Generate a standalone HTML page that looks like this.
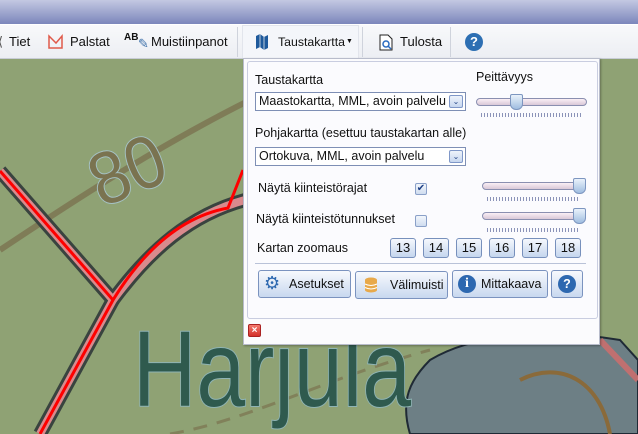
<!DOCTYPE html>
<html><head><style>
*{margin:0;padding:0;box-sizing:border-box}
html,body{overflow:hidden}
body{width:638px;height:434px;position:relative;font-family:"Liberation Sans","DejaVu Sans",sans-serif;font-size:12px;color:#111;background:#8fa274}
#top{position:absolute;left:0;top:0;width:638px;height:24px;background:linear-gradient(#c3c8e2,#7b86bb)}
#tb{position:absolute;left:0;top:24px;width:638px;height:35px;background:linear-gradient(#f8f9fb,#eceef3);border-top:1px solid #fff;border-bottom:1px solid #c8ccd6;overflow:hidden}
.ti{position:absolute;top:0;height:34px;line-height:34px;font-size:13px;white-space:nowrap}
.ic{position:absolute;top:9px}
.sep{position:absolute;top:2px;width:1px;height:30px;background:#cfd3dc}
#panel{position:absolute;left:243px;top:58px;width:357px;height:287px;background:#fbfbfd;border:1px solid #b8bccb;box-shadow:1px 1px 2px rgba(0,0,0,.3)}
#inner{position:absolute;left:3px;top:2px;width:351px;height:258px;border:1px solid #c9cde0;border-radius:3px;background:#fbfbfe}
.lbl{position:absolute;font-size:12.5px;white-space:nowrap}
.sel{position:absolute;height:19px;border:1px solid #7e8fb5;background:#fff;font-size:12.5px;line-height:17px;padding-left:3px;white-space:nowrap}
.sel i{position:absolute;right:2px;top:2px;width:14px;height:13px;border:1px solid #7f97c8;border-radius:2px;background:linear-gradient(#eef3fb,#c6d6ef);font-style:normal;font-size:8px;line-height:12px;text-align:center;color:#2b4a8a}
.sl{position:absolute;height:8px;border:1px solid #8a8fb0;border-radius:4px;background:linear-gradient(#fbeff5,#d9c8d8)}
.ticks{position:absolute;height:4px;background:repeating-linear-gradient(90deg,#8b93b8 0 1px,transparent 1px 3px)}
.knob{position:absolute;width:13px;height:16px;background:linear-gradient(#eaf2fb,#9fbde0);border:1px solid #7d96c0;border-radius:2px 2px 6px 6px}
.cb{position:absolute;width:12px;height:12px;border:1px solid #8aa0c8;background:linear-gradient(#f2f6fc,#cfdcef);border-radius:2px;font-size:10px;line-height:10px;text-align:center;color:#1d3f86}
.z{position:absolute;width:26px;height:20px;border:1px solid #7790bc;border-radius:3px;background:linear-gradient(#f5f8fd,#c5d6ee);text-align:center;line-height:18px;font-size:13px}
.bt{position:absolute;height:28px;border:1px solid #7b93bf;border-radius:3px;background:linear-gradient(#f7f9fd,#c8d8ef);font-size:12.5px;line-height:26px;white-space:nowrap}
</style></head><body>
<svg width="638" height="434" style="position:absolute;left:0;top:0">
<path d="M0,250 C60,210 150,150 250,100" stroke="#7a7350" stroke-width="6" fill="none" opacity=".8"/>
<path d="M170,434 C250,420 320,380 430,350" stroke="#7a7350" stroke-width="3" stroke-dasharray="14 10" fill="none" opacity=".7"/>
<g fill="none" stroke-linejoin="round">
<path d="M0,171 L113,300 L40,434" stroke="#39433f" stroke-width="14"/>
<path d="M113,300 C150,250 190,215 245,200" stroke="#39433f" stroke-width="14"/>
<path d="M0,171 L113,300 L40,434" stroke="#d98a8d" stroke-width="8"/>
<path d="M113,300 C150,250 190,215 245,200" stroke="#d98a8d" stroke-width="8"/>
<path d="M0,171 L113,300 L40,434" stroke="#ff0000" stroke-width="3"/>
<path d="M113,300 C150,240 190,215 228,208 L243,170" stroke="#ff0000" stroke-width="3"/>
</g>
<path d="M430,360 C480,330 560,330 620,340 L638,360 L638,434 L410,434 C400,400 410,380 430,360Z" fill="#6d7f85" stroke="#1f2a35" stroke-width="2"/>
<path d="M520,380 C560,360 600,380 610,434" stroke="#8a6a3a" stroke-width="4" fill="none"/>
<path d="M600,340 L638,380" stroke="#c07070" stroke-width="6"/>
<text x="86" y="196" transform="rotate(-22 124 162)" font-family="Liberation Sans" font-size="74" fill="#7a7350" stroke="#a5c2c4" stroke-width="2" paint-order="stroke" textLength="76" lengthAdjust="spacingAndGlyphs">80</text>
<text x="133" y="406" font-family="Liberation Sans" font-size="108" fill="#2f5a4e" stroke="#8fb4b4" stroke-width="2" paint-order="stroke" textLength="278" lengthAdjust="spacingAndGlyphs">Harjula</text>
</svg>
<div id="top"></div>
<div id="tb">
<div class="ti" style="left:-2px;color:#555">&#10216;</div>
<div class="ti" style="left:9px">Tiet</div>
<svg class="ic" style="left:48px" width="15" height="16"><path d="M1,2 L1,14 L14,14 L14,2 L8,9 Z" fill="none" stroke="#e05a4a" stroke-width="1.5"/></svg>
<div class="ti" style="left:70px">Palstat</div>
<div class="ti" style="left:124px;top:-4px;font-size:10px;font-weight:bold">AB</div>
<div class="ti" style="left:138px;top:2px;color:#3a6ea8">&#9998;</div>
<div class="ti" style="left:151px">Muistiinpanot</div>
<div class="sep" style="left:237px"></div>
<div style="position:absolute;left:242px;top:0;width:117px;height:34px;background:#f4f6fa;border:1px solid #e2e5ec"></div>
<svg class="ic" style="left:255px" width="14" height="17"><path d="M1,2 L5,0 L9,3 L13,1 L13,14 L9,16 L5,13 L1,15Z" fill="#1f5a9c"/><path d="M5,0 L5,13 M9,3 L9,16" stroke="#bcd" stroke-width="1"/></svg>
<div class="ti" style="left:278px;font-size:12.3px">Taustakartta</div>
<div class="ti" style="left:346px;font-size:7px">&#9660;</div>
<div class="sep" style="left:362px"></div>
<svg class="ic" style="left:379px" width="15" height="17"><path d="M1,1 L9,1 L13,5 L13,16 L1,16Z" fill="#fff" stroke="#222"/><circle cx="7" cy="10" r="3" fill="none" stroke="#2a6ac0" stroke-width="1.5"/><path d="M9,12 L12,15" stroke="#2a6ac0" stroke-width="1.5"/></svg>
<div class="ti" style="left:400px">Tulosta</div>
<div class="sep" style="left:450px"></div>
<div style="position:absolute;left:465px;top:8px;width:18px;height:18px;border-radius:9px;background:#2d6fb3;color:#fff;font-weight:bold;text-align:center;line-height:18px;font-size:13px">?</div>
</div>
<div id="panel">
<div id="inner">
<div class="lbl" style="left:7px;top:11px">Taustakartta</div>
<div class="lbl" style="left:228px;top:8px">Peittävyys</div>
<div class="sel" style="left:7px;top:30px;width:211px">Maastokartta, MML, avoin palvelu<i>&#8964;</i></div>
<div class="sl" style="left:228px;top:36px;width:111px"></div>
<div class="knob" style="left:262px;top:32px"></div>
<div class="ticks" style="left:233px;top:51px;width:100px"></div>
<div class="lbl" style="left:7px;top:64px">Pohjakartta (esettuu taustakartan alle)</div>
<div class="sel" style="left:7px;top:85px;width:211px">Ortokuva, MML, avoin palvelu<i>&#8964;</i></div>
<div class="lbl" style="left:10px;top:119px">Näytä kiinteistörajat</div>
<div class="cb" style="left:167px;top:121px">&#10004;</div>
<div class="sl" style="left:234px;top:120px;width:104px"></div>
<div class="knob" style="left:325px;top:116px"></div>
<div class="ticks" style="left:239px;top:135px;width:92px"></div>
<div class="lbl" style="left:8px;top:150px">Näytä kiinteistötunnukset</div>
<div class="cb" style="left:167px;top:153px"></div>
<div class="sl" style="left:234px;top:150px;width:104px"></div>
<div class="knob" style="left:325px;top:146px"></div>
<div class="ticks" style="left:239px;top:166px;width:92px"></div>
<div class="lbl" style="left:9px;top:179px">Kartan zoomaus</div>
<div class="z" style="left:142px;top:176px">13</div>
<div class="z" style="left:175px;top:176px">14</div>
<div class="z" style="left:208px;top:176px">15</div>
<div class="z" style="left:241px;top:176px">16</div>
<div class="z" style="left:274px;top:176px">17</div>
<div class="z" style="left:307px;top:176px">18</div>
<div style="position:absolute;left:7px;top:201px;width:331px;height:1px;background:#b9c2d8"></div>
<div class="bt" style="left:10px;top:208px;width:93px"><span style="color:#2d68b0;font-size:18px;position:absolute;left:5px;top:-1px">&#9881;</span><span style="position:absolute;left:30px">Asetukset</span></div>
<div class="bt" style="left:107px;top:209px;width:93px"><svg width="14" height="16" style="position:absolute;left:8px;top:5px"><ellipse cx="7" cy="3" rx="6" ry="2.5" fill="#e8a94a"/><rect x="1" y="3" width="12" height="10" fill="#e8a94a"/><ellipse cx="7" cy="13" rx="6" ry="2.5" fill="#e8a94a"/><path d="M1,7 Q7,10 13,7 M1,10.5 Q7,13.5 13,10.5" stroke="#fff" fill="none"/></svg><span style="position:absolute;left:34px">Välimuisti</span></div>
<div class="bt" style="left:204px;top:208px;width:96px"><span style="position:absolute;left:5px;top:4px;width:18px;height:18px;border-radius:9px;background:#2d68b0;color:#fff;font-weight:bold;font-family:'Liberation Serif';text-align:center;line-height:18px;font-size:14px">i</span><span style="position:absolute;left:28px">Mittakaava</span></div>
<div class="bt" style="left:303px;top:208px;width:32px"><span style="position:absolute;left:6px;top:4px;width:18px;height:18px;border-radius:9px;background:#2d68b0;color:#fff;font-weight:bold;text-align:center;line-height:18px">?</span></div>
</div>
<div style="position:absolute;left:4px;top:265px;width:13px;height:13px;background:linear-gradient(#f37a6e,#d3302a);border:1px solid #a22;border-radius:2px;color:#fff;font-size:10px;line-height:11px;text-align:center;font-weight:bold">&#215;</div>
</div>
</body></html>
